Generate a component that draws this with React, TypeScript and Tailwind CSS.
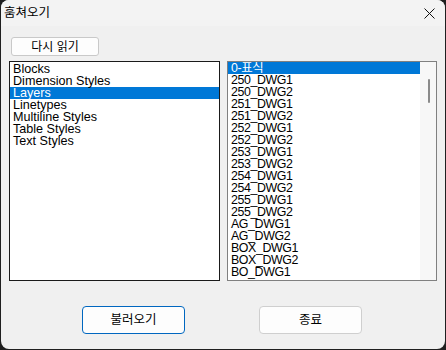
import React from "react";

const FONT = { fontFamily: '"Liberation Sans", "Noto Sans CJK KR", sans-serif' };

const leftItems = [
  "Blocks",
  "Dimension Styles",
  "Layers",
  "Linetypes",
  "Multiline Styles",
  "Table Styles",
  "Text Styles",
];

const rightItems = [
  "0-표식",
  "250_DWG1",
  "250_DWG2",
  "251_DWG1",
  "251_DWG2",
  "252_DWG1",
  "252_DWG2",
  "253_DWG1",
  "253_DWG2",
  "254_DWG1",
  "254_DWG2",
  "255_DWG1",
  "255_DWG2",
  "AG_DWG1",
  "AG_DWG2",
  "BOX_DWG1",
  "BOX_DWG2",
  "BO_DWG1",
];

export default function App() {
  return (
    <div className="w-[446px] h-[350px] bg-[#1f1f1f] px-px pb-px" style={FONT}>
      <div className="h-full bg-[#f0f0f0] rounded-lg flex flex-col overflow-hidden">
        {/* title bar */}
        <div className="h-[26px] shrink-0 bg-[#f3f3f3] flex items-center justify-between pl-[3px] pr-[10px]">
          <span className="text-[12.5px] leading-none text-black pt-[1px]">훔쳐오기</span>
          <svg width="11" height="11" viewBox="0 0 11 11" className="mt-[1px]">
            <path d="M0.5 0.5 L10.5 10.5 M10.5 0.5 L0.5 10.5" stroke="#111" strokeWidth="1" fill="none" />
          </svg>
        </div>

        {/* content */}
        <div className="flex flex-col pt-[11px]">
          <button className="ml-[10px] w-[88px] h-[19px] bg-[#fdfdfd] border border-[#c9c9c9] rounded-[3px] text-[12px] leading-none text-black flex items-center justify-center">
            다시 읽기
          </button>

          <div className="flex mt-[5px] ml-[8px] gap-[7px]">
            {/* left list */}
            <div className="w-[211px] h-[220px] bg-white border border-[#1a1a1a] pt-px">
              {leftItems.map((t) => (
                <div
                  key={t}
                  className={
                    t === "Layers"
                      ? "h-[12px] leading-[12px] text-[12.6px] pl-[3px] bg-[#0078d7] text-white"
                      : "h-[12px] leading-[12px] text-[12.6px] pl-[3px] text-black"
                  }
                >
                  {t}
                </div>
              ))}
            </div>

            {/* right list */}
            <div className="w-[210px] h-[220px] bg-white border border-[#808080] flex overflow-hidden">
              <div className="w-[192px] flex flex-col">
                {rightItems.map((t, i) => (
                  <div
                    key={t}
                    className={
                      i === 0
                        ? "h-[12px] shrink-0 leading-[12px] text-[12.4px] tracking-[-0.4px] pl-[3px] bg-[#0078d7] text-white"
                        : "h-[12px] shrink-0 leading-[12px] text-[12.4px] tracking-[-0.4px] pl-[3px] text-black"
                    }
                  >
                    {t}
                  </div>
                ))}
              </div>
              <div className="flex-1 bg-[#f7f7f7] flex justify-center pt-[17px]">
                <div className="w-[2px] h-[24px] bg-[#8a8a8a] rounded-full ml-[2px]" />
              </div>
            </div>
          </div>

          {/* bottom buttons */}
          <div className="flex mt-[25px] ml-[81px] gap-[74px]">
            <button className="w-[103px] h-[28px] bg-[#fdfdfd] border border-[#0067c0] rounded-[4px] text-[12.5px] leading-none text-black flex items-center justify-center">
              불러오기
            </button>
            <button className="w-[103px] h-[28px] bg-[#fdfdfd] border border-[#cfcfcf] rounded-[4px] text-[12.5px] leading-none text-black flex items-center justify-center">
              종료
            </button>
          </div>
        </div>
      </div>
    </div>
  );
}
